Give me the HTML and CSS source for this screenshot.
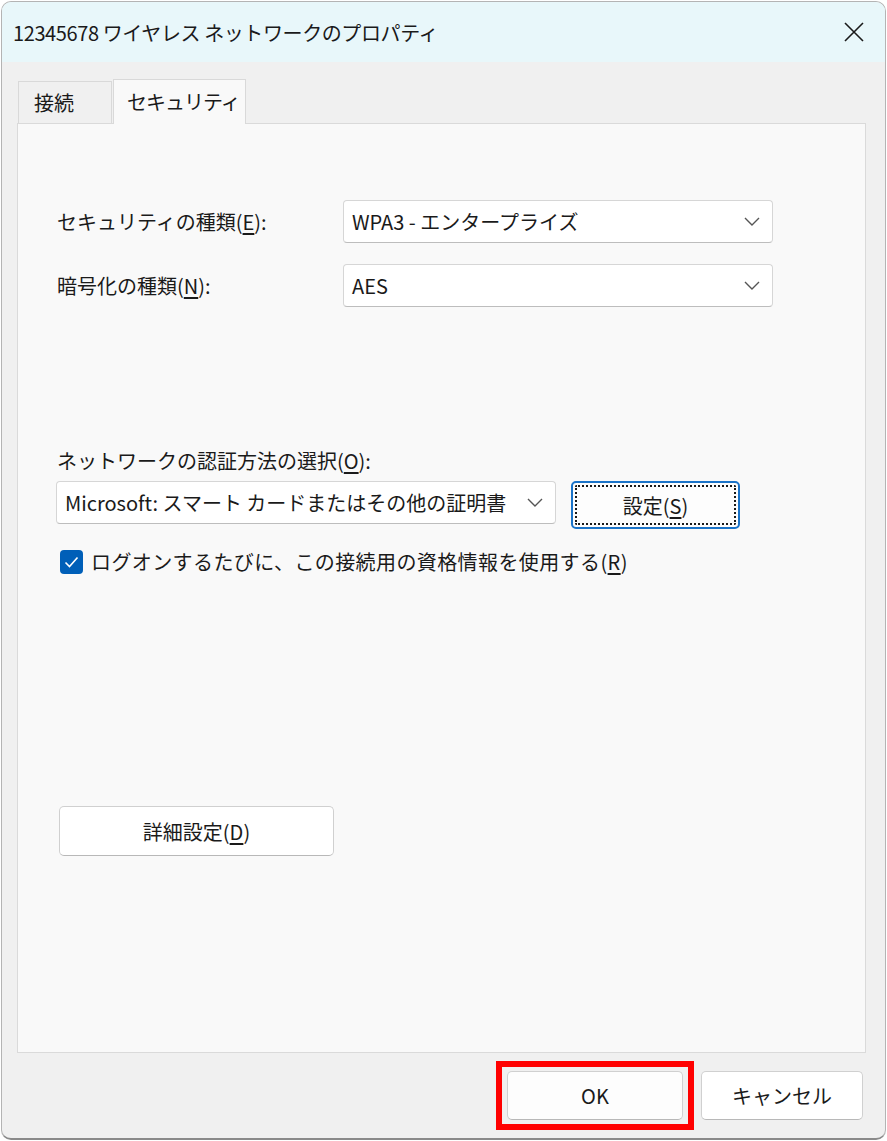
FILE: index.html
```html
<!DOCTYPE html>
<html lang="ja">
<head>
  <meta charset="UTF-8" />
  <title>12345678 ワイヤレス ネットワークのプロパティ</title>
  <link rel="stylesheet" href="styles.css">
</head>
<body>
  <div class="window">
    <div class="titlebar">
      <span class="title">12345678 ワイヤレス ネットワークのプロパティ</span>
      <svg class="close" width="22" height="22" viewBox="0 0 22 22">
        <path d="M2 2 L20 20 M20 2 L2 20" stroke="#1a1a1a" stroke-width="1.6" fill="none"/>
      </svg>
    </div>

    <div class="client">
      <div class="tabs">
        <div class="tab">接続</div>
        <div class="tab active">セキュリティ</div>
      </div>

      <div class="panel">
        <div class="field-row first">
          <label class="field-label">セキュリティの種類(<u>E</u>):</label>
          <div class="combo wide">
            <span>WPA3 - エンタープライズ</span>
            <svg class="chevron" width="16" height="9" viewBox="0 0 16 9"><path d="M1 1 L8 8 L15 1" stroke="#555" stroke-width="1.4" fill="none"/></svg>
          </div>
        </div>
        <div class="field-row">
          <label class="field-label">暗号化の種類(<u>N</u>):</label>
          <div class="combo wide">
            <span>AES</span>
            <svg class="chevron" width="16" height="9" viewBox="0 0 16 9"><path d="M1 1 L8 8 L15 1" stroke="#555" stroke-width="1.4" fill="none"/></svg>
          </div>
        </div>

        <div class="auth-label">ネットワークの認証方法の選択(<u>O</u>):</div>
        <div class="auth-row">
          <div class="combo auth">
            <span>Microsoft: スマート カードまたはその他の証明書</span>
            <svg class="chevron" width="16" height="9" viewBox="0 0 16 9"><path d="M1 1 L8 8 L15 1" stroke="#555" stroke-width="1.4" fill="none"/></svg>
          </div>
          <button class="btn focused"><span class="focus-rect">設定(<u>S</u>)</span></button>
        </div>

        <div class="check-row">
          <span class="checkbox">
            <svg width="15" height="12" viewBox="0 0 15 12"><path d="M1.5 6.5 L5.5 10.5 L13.5 1.5" stroke="#fff" stroke-width="1.6" fill="none"/></svg>
          </span>
          <span>ログオンするたびに、この接続用の資格情報を使用する(<u>R</u>)</span>
        </div>

        <button class="btn advanced">詳細設定(<u>D</u>)</button>
      </div>

      <div class="footer">
        <div class="highlight">
          <button class="btn ok">OK</button>
        </div>
        <button class="btn cancel">キャンセル</button>
      </div>
    </div>
  </div>
</body>
</html>
```

FILE: styles.css
```css
* {
  margin: 0;
  padding: 0;
  box-sizing: border-box;
}

body {
  font-family: "Noto Sans CJK JP", "Noto Sans", sans-serif;
  font-size: 20px;
  color: #1a1a1a;
  background: #ffffff;
  width: 887px;
  height: 1141px;
  overflow: hidden;
}

u {
  text-underline-offset: 3px;
}

.window {
  width: 885px;
  height: 1139px;
  margin: 1px 0 0 1px;
  border: 1px solid #b4b4b4;
  border-bottom: 2px solid #8a8a8a;
  border-radius: 10px;
  overflow: hidden;
  display: flex;
  flex-direction: column;
  background: #f0f0f0;
}

.titlebar {
  height: 60px;
  background: #e8f7fa;
  display: flex;
  align-items: center;
  justify-content: space-between;
  padding: 0 20px 0 11px;
  flex-shrink: 0;
}

.title {
  font-size: 20px;
  letter-spacing: -0.4px;
}

.client {
  flex: 1;
  display: flex;
  flex-direction: column;
  padding: 17px 19px 0 15px;
}

.tabs {
  display: flex;
  height: 44px;
  align-items: flex-end;
  padding-left: 1px;
}

.tab {
  height: 42px;
  width: 94px;
  padding-left: 15px;
  border: 1px solid #d9d9d9;
  border-bottom: none;
  background: #f0f0f0;
  display: flex;
  align-items: center;
  white-space: nowrap;
}

.tab.active {
  width: 133px;
  height: 45px;
  margin-bottom: -1px;
  margin-left: 1px;
  padding-left: 13px;
  padding-bottom: 2px;
  letter-spacing: -1px;
  background: #f9f9f9;
  position: relative;
  z-index: 1;
}

.panel {
  height: 930px;
  border: 1px solid #dadada;
  background: #f9f9f9;
  padding: 0 0 0 39px;
  display: flex;
  flex-direction: column;
}

.field-row {
  display: flex;
  align-items: center;
  margin-top: 21px;
}

.field-row.first {
  margin-top: 76px;
}

.field-label {
  width: 286px;
}

.combo {
  height: 43px;
  background: #ffffff;
  border: 1px solid #d6d6d6;
  border-bottom-color: #bdbdbd;
  border-radius: 4px;
  display: flex;
  align-items: center;
  justify-content: space-between;
  padding: 0 12px 0 8px;
}

.combo.wide {
  width: 430px;
}

.combo.auth {
  width: 500px;
  margin-left: -1px;
}

.auth-label {
  margin-top: 140px;
  line-height: 28px;
}

.auth-row {
  display: flex;
  align-items: flex-start;
  margin-top: 6px;
}

.btn {
  font-family: inherit;
  font-size: 20px;
  color: #1a1a1a;
  background: #fdfdfd;
  border: 1px solid #d0d0d0;
  border-bottom-color: #b8b8b8;
  border-radius: 5px;
  cursor: pointer;
  display: flex;
  align-items: center;
  justify-content: center;
}

.btn.focused {
  width: 169px;
  height: 48px;
  margin-left: 15px;
  border: 2px solid #1a73c8;
  padding: 2px;
}

.focus-rect {
  width: 100%;
  height: 100%;
  border: 2px dotted #1a1a1a;
  border-radius: 2px;
  display: flex;
  align-items: center;
  justify-content: center;
}

.check-row {
  display: flex;
  align-items: center;
  gap: 8px;
  margin-top: 18px;
  margin-left: 3px;
  letter-spacing: 0.4px;
}

.checkbox {
  width: 23px;
  height: 24px;
  border-radius: 4px;
  background: #005fb8;
  display: flex;
  align-items: center;
  justify-content: center;
}

.btn.advanced {
  width: 275px;
  height: 50px;
  margin-top: 230px;
  margin-left: 2px;
  background: #ffffff;
}

.footer {
  display: flex;
  align-items: center;
  padding-left: 479px;
  margin-top: 8px;
}

.highlight {
  border: 6px solid #ff0000;
  padding: 4px 5px;
}

.btn.ok {
  width: 176px;
  height: 49px;
}

.btn.cancel {
  width: 162px;
  height: 49px;
  margin-left: 7px;
  background: #ffffff;
}
```
